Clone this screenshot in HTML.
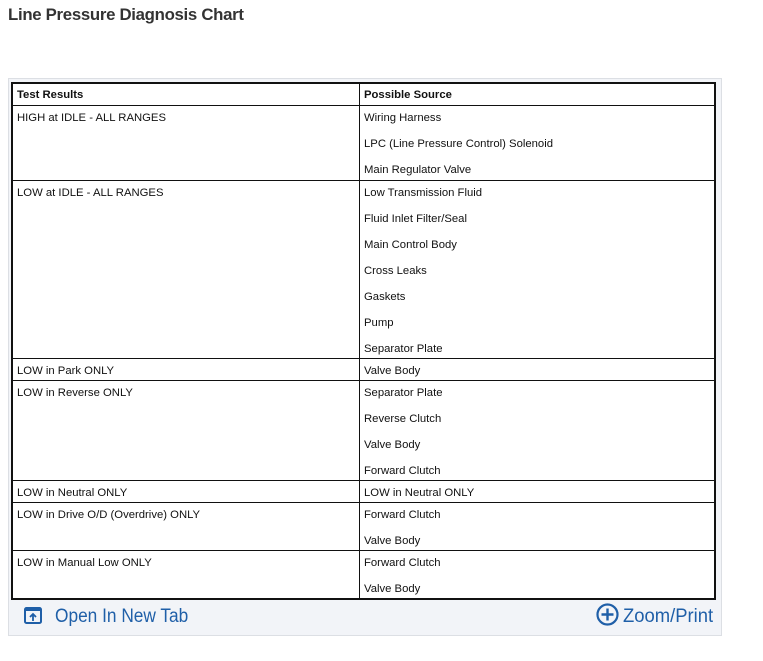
<!DOCTYPE html>
<html><head><style>
body{margin:0;background:#fff;width:763px;height:661px;position:relative;font-family:"Liberation Sans",Arial,sans-serif;}
.title{position:absolute;left:8px;top:5px;font-size:16.8px;font-weight:bold;color:#333;letter-spacing:-0.3px;}
.box{position:absolute;left:8px;top:78px;width:714px;height:558px;background:#f2f4f8;border:1px solid #dcdfe4;box-sizing:border-box;}
table{position:absolute;left:11px;top:82px;width:705px;border-collapse:collapse;background:#fff;border:2px solid #111;font-size:11.3px;color:#111;}
td{border:1px solid #111;vertical-align:top;padding:0 4px;}
td.a{width:338px;}
.i{height:26px;line-height:14px;padding-top:5px;box-sizing:border-box;}
.i:last-child{height:21px;}
.r1 .i:last-child{height:22px;}
th{font-weight:bold;text-align:left;padding:0 4px;height:21px;border:1px solid #111;font-size:11.3px;}
.ft{position:absolute;top:606px;font-size:19px;color:#1f5fa8;transform-origin:left top;transform:scaleX(0.91);}
</style></head><body>
<div class="title">Line Pressure Diagnosis Chart</div>
<div class="box"></div>
<table>
<tr><th>Test Results</th><th>Possible Source</th></tr>
<tr class="r1"><td class="a"><div class="i">HIGH at IDLE - ALL RANGES</div></td><td><div class="i">Wiring Harness</div><div class="i">LPC (Line Pressure Control) Solenoid</div><div class="i">Main Regulator Valve</div></td></tr>
<tr><td class="a"><div class="i">LOW at IDLE - ALL RANGES</div></td><td><div class="i">Low Transmission Fluid</div><div class="i">Fluid Inlet Filter/Seal</div><div class="i">Main Control Body</div><div class="i">Cross Leaks</div><div class="i">Gaskets</div><div class="i">Pump</div><div class="i">Separator Plate</div></td></tr>
<tr><td class="a"><div class="i">LOW in Park ONLY</div></td><td><div class="i">Valve Body</div></td></tr>
<tr><td class="a"><div class="i">LOW in Reverse ONLY</div></td><td><div class="i">Separator Plate</div><div class="i">Reverse Clutch</div><div class="i">Valve Body</div><div class="i">Forward Clutch</div></td></tr>
<tr><td class="a"><div class="i">LOW in Neutral ONLY</div></td><td><div class="i">LOW in Neutral ONLY</div></td></tr>
<tr><td class="a"><div class="i">LOW in Drive O/D (Overdrive) ONLY</div></td><td><div class="i">Forward Clutch</div><div class="i">Valve Body</div></td></tr>
<tr><td class="a"><div class="i">LOW in Manual Low ONLY</div></td><td><div class="i">Forward Clutch</div><div class="i">Valve Body</div></td></tr>
</table>
<svg style="position:absolute;left:24px;top:607px" width="18" height="17" viewBox="0 0 18 17"><rect x="1" y="1" width="16" height="15" rx="1.5" fill="none" stroke="#1f5fa8" stroke-width="2"/><rect x="1" y="1" width="16" height="3" fill="#1f5fa8"/><path d="M9 14V8M6 10l3-3 3 3" fill="none" stroke="#1f5fa8" stroke-width="1.8"/></svg>
<div class="ft" style="left:55px">Open In New Tab</div>
<svg style="position:absolute;left:596px;top:603px" width="23" height="23" viewBox="0 0 23 23"><circle cx="11.5" cy="11.5" r="10" fill="none" stroke="#1f5fa8" stroke-width="2.2"/><path d="M11.5 5.5v12M5.5 11.5h12" stroke="#1f5fa8" stroke-width="2.4"/></svg>
<div class="ft" style="left:623px;transform:scaleX(0.97)">Zoom/Print</div>
</body></html>
